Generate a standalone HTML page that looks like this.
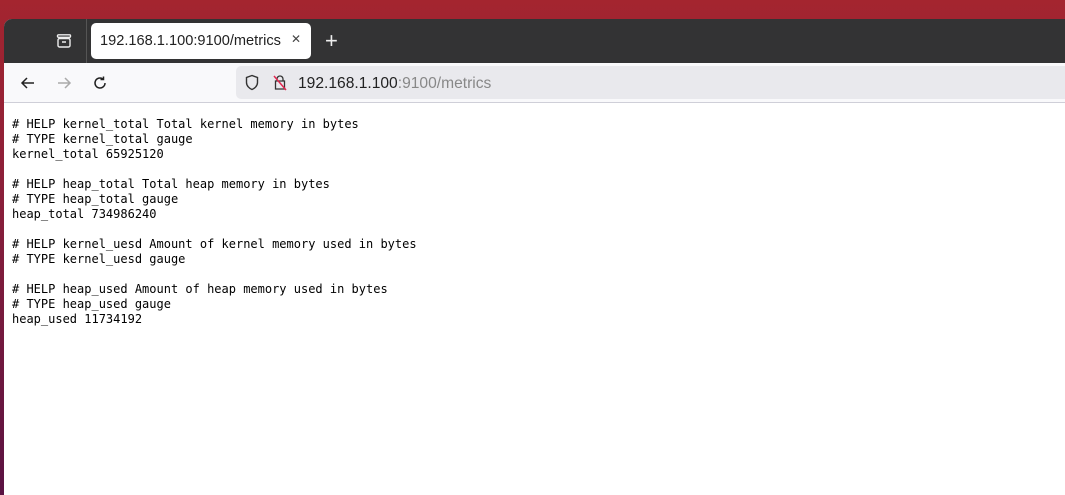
<!DOCTYPE html>
<html><head><meta charset="utf-8"><style>
*{margin:0;padding:0;box-sizing:border-box}
html,body{width:1065px;height:495px;overflow:hidden;background:linear-gradient(#a4252f 0%,#8a1f3a 40%,#5a1242 100%);font-family:"Liberation Sans","DejaVu Sans",sans-serif}
.win{position:absolute;left:4px;top:19px;width:1061px;height:476px;background:#fff;border-top-left-radius:8px;overflow:hidden}
.tabs{position:absolute;left:0;top:0;right:0;height:44px;background:#333334}
.sep{position:absolute;left:82px;top:0;width:1px;height:44px;background:#555}
.tab{position:absolute;left:87px;top:4px;width:220px;height:36px;background:#fff;border-radius:5px;font-size:14.6px;color:#222;padding:10px 0 0 9px}
.tab .x{position:absolute;left:200px;top:9px;font-size:12px;color:#444}
.plus{position:absolute;left:321px;top:9px;color:#eee;font-size:22px;font-weight:300}
.tb{position:absolute;left:0;top:44px;right:0;height:40px;background:#f9f9fb;border-bottom:1px solid #cfcfd8}
.url{position:absolute;left:232px;top:3px;right:0;height:33px;background:#e9e9ed;border-radius:5px 0 0 5px;font-size:15.6px;color:#222;padding:9px 0 0 62px}
.url span{color:#888}
pre{position:absolute;left:8px;top:98px;font-family:"DejaVu Sans Mono",monospace;font-size:12px;line-height:15px;color:#000}
</style></head><body>
<div class="win">
<div class="tabs">
<svg style="position:absolute;left:52px;top:15px" width="16" height="14" viewBox="0 0 16 14"><rect x="1.5" y="0.8" width="13" height="2.5" rx="1" fill="none" stroke="#eee" stroke-width="1.4"/><rect x="2" y="4.5" width="12" height="8.5" rx="1.5" fill="none" stroke="#eee" stroke-width="1.4"/><line x1="6" y1="8" x2="10" y2="8" stroke="#eee" stroke-width="1.4"/></svg>
<div class="sep"></div>
<div class="tab">192.168.1.100:9100/metrics<span class="x">✕</span></div>
<div class="plus">+</div>
</div>
<div class="tb">
<svg style="position:absolute;left:16px;top:12px" width="16" height="16" viewBox="0 0 16 16"><path d="M14 8H2M7 3L2 8l5 5" fill="none" stroke="#222" stroke-width="1.5"/></svg>
<svg style="position:absolute;left:52px;top:12px" width="16" height="16" viewBox="0 0 16 16"><path d="M2 8h12M9 3l5 5-5 5" fill="none" stroke="#aaa" stroke-width="1.5"/></svg>
<svg style="position:absolute;left:88px;top:12px" width="16" height="16" viewBox="0 0 16 16"><path d="M13 8a5 5 0 1 1-2-4M11.5 1.5v3h-3" fill="none" stroke="#222" stroke-width="1.5"/></svg>
<div class="url">
<svg style="position:absolute;left:8px;top:8px" width="16" height="17" viewBox="0 0 16 17"><path d="M8 1.5L2.5 3.5v5c0 3.5 3 6 5.5 7 2.5-1 5.5-3.5 5.5-7v-5z" fill="none" stroke="#333" stroke-width="1.4"/></svg>
<svg style="position:absolute;left:36px;top:8px" width="16" height="17" viewBox="0 0 16 17"><path d="M5 7V5a3 3 0 0 1 6 0v2M3.5 7h9v8h-9z" fill="none" stroke="#333" stroke-width="1.3"/><line x1="2" y1="2" x2="14" y2="16" stroke="#e22850" stroke-width="1.5"/></svg>
192.168.1.100<span>:9100/metrics</span></div>
</div>
<pre># HELP kernel_total Total kernel memory in bytes
# TYPE kernel_total gauge
kernel_total 65925120

# HELP heap_total Total heap memory in bytes
# TYPE heap_total gauge
heap_total 734986240

# HELP kernel_uesd Amount of kernel memory used in bytes
# TYPE kernel_uesd gauge

# HELP heap_used Amount of heap memory used in bytes
# TYPE heap_used gauge
heap_used 11734192</pre>
</div>
</body></html>
